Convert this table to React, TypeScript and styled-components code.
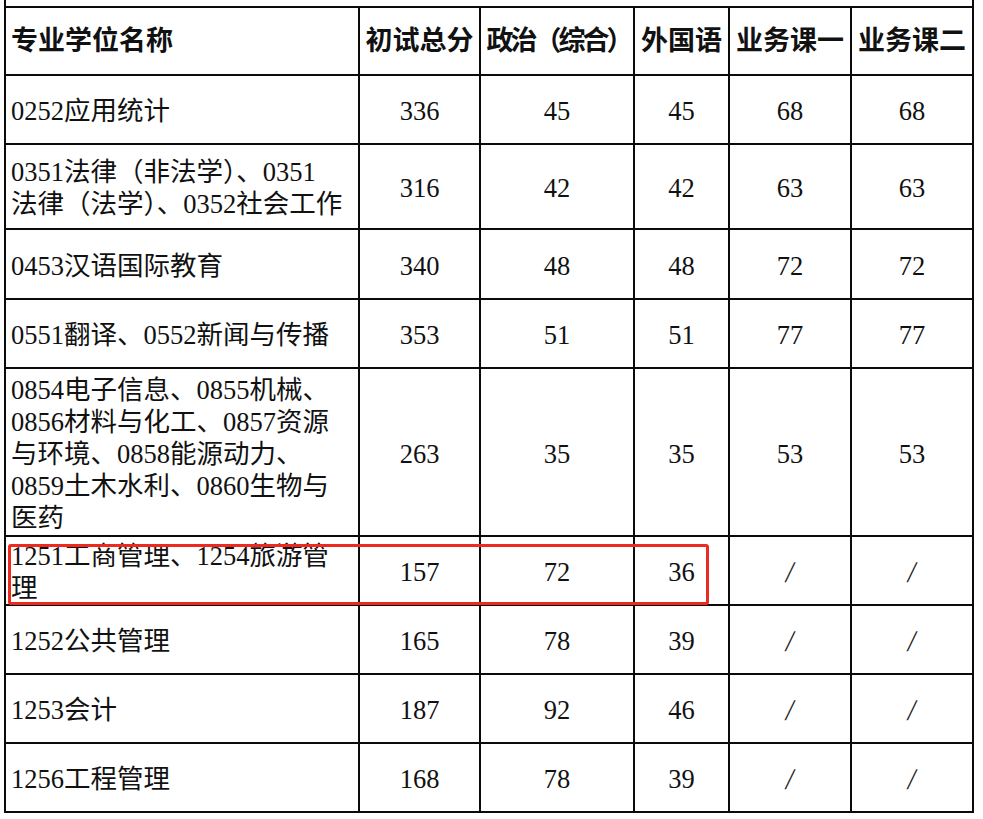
import React from 'react';
import styled, { createGlobalStyle } from 'styled-components';

const GlobalStyle = createGlobalStyle`
  body {
    margin: 0;
    background: #ffffff;
    font-family: "Liberation Serif", "Noto Sans CJK SC", serif;
    color: #111;
  }
`;

type Row = {
  name: string;
  height: number;
  total: string;
  politics: string;
  foreign: string;
  course1: string;
  course2: string;
};

const rows: Row[] = [
  { name: '0252应用统计', height: 67, total: '336', politics: '45', foreign: '45', course1: '68', course2: '68' },
  { name: '0351法律（非法学）、0351\n法律（法学）、0352社会工作', height: 83, total: '316', politics: '42', foreign: '42', course1: '63', course2: '63' },
  { name: '0453汉语国际教育', height: 68, total: '340', politics: '48', foreign: '48', course1: '72', course2: '72' },
  { name: '0551翻译、0552新闻与传播', height: 67, total: '353', politics: '51', foreign: '51', course1: '77', course2: '77' },
  {
    name: '0854电子信息、0855机械、\n0856材料与化工、0857资源\n与环境、0858能源动力、\n0859土木水利、0860生物与\n医药',
    height: 166,
    total: '263',
    politics: '35',
    foreign: '35',
    course1: '53',
    course2: '53',
  },
  { name: '1251工商管理、1254旅游管\n理', height: 67, total: '157', politics: '72', foreign: '36', course1: '/', course2: '/' },
  { name: '1252公共管理', height: 67, total: '165', politics: '78', foreign: '39', course1: '/', course2: '/' },
  { name: '1253会计', height: 67, total: '187', politics: '92', foreign: '46', course1: '/', course2: '/' },
  { name: '1256工程管理', height: 67, total: '168', politics: '78', foreign: '39', course1: '/', course2: '/' },
];

const Page = styled.div`
  position: relative;
  padding-left: 4px;
  width: 970px;
`;

const Sheet = styled.div<{ $rows: string }>`
  display: grid;
  grid-template-columns: 352px 119px 152px 93px 120px 120px;
  grid-template-rows: ${(p) => p.$rows};
  gap: 2px;
  padding: 0 2px 2px 2px;
  background: #0b0b0b;
  box-shadow: 0 2px 0 #9a9a9a;
`;

const Stub = styled.div`
  grid-column: 1 / -1;
  background: #fff;
`;

const Cell = styled.div<{ $left?: boolean; $head?: boolean }>`
  background: #fff;
  display: flex;
  align-items: center;
  justify-content: ${(p) => (p.$left ? 'flex-start' : 'center')};
  padding: ${(p) => (p.$head ? '0' : '3px 0 0 0')};
  padding-left: ${(p) => (p.$left ? '5px' : '0')};
  font-size: ${(p) => (p.$head ? '27px' : '26.5px')};
  font-weight: ${(p) => (p.$head ? 700 : 400)};
  line-height: 32px;
  white-space: pre-line;
  overflow: hidden;
`;

const HeadText = styled.span<{ $tight?: boolean }>`
  white-space: nowrap;
  letter-spacing: ${(p) => (p.$tight ? '-3px' : '0')};
  margin-right: ${(p) => (p.$tight ? '-3px' : '0')};
`;

const Slash = styled.span`
  display: inline-block;
  font-size: 30px;
  color: #222;
  transform: skewX(-8deg);
`;

const Mark = styled.div`
  position: absolute;
  left: 8px;
  top: 544px;
  width: 701px;
  height: 61px;
  box-sizing: border-box;
  border: 3px solid #ee2a20;
  border-radius: 3px;
  pointer-events: none;
`;

function Value({ v }: { v: string }) {
  return <Cell>{v === '/' ? <Slash>/</Slash> : v}</Cell>;
}

export default function App() {
  const template = ['6px', '66px', ...rows.map((r) => `${r.height}px`)].join(' ');
  return (
    <Page>
      <GlobalStyle />
      <Sheet $rows={template}>
        <Stub />
        <Cell $left $head>
          <HeadText>专业学位名称</HeadText>
        </Cell>
        <Cell $head>
          <HeadText>初试总分</HeadText>
        </Cell>
        <Cell $head>
          <HeadText $tight>政治（综合）</HeadText>
        </Cell>
        <Cell $head>
          <HeadText>外国语</HeadText>
        </Cell>
        <Cell $head>
          <HeadText>业务课一</HeadText>
        </Cell>
        <Cell $head>
          <HeadText>业务课二</HeadText>
        </Cell>
        {rows.map((r) => (
          <React.Fragment key={r.name}>
            <Cell $left>{r.name}</Cell>
            <Value v={r.total} />
            <Value v={r.politics} />
            <Value v={r.foreign} />
            <Value v={r.course1} />
            <Value v={r.course2} />
          </React.Fragment>
        ))}
      </Sheet>
      <Mark />
    </Page>
  );
}
